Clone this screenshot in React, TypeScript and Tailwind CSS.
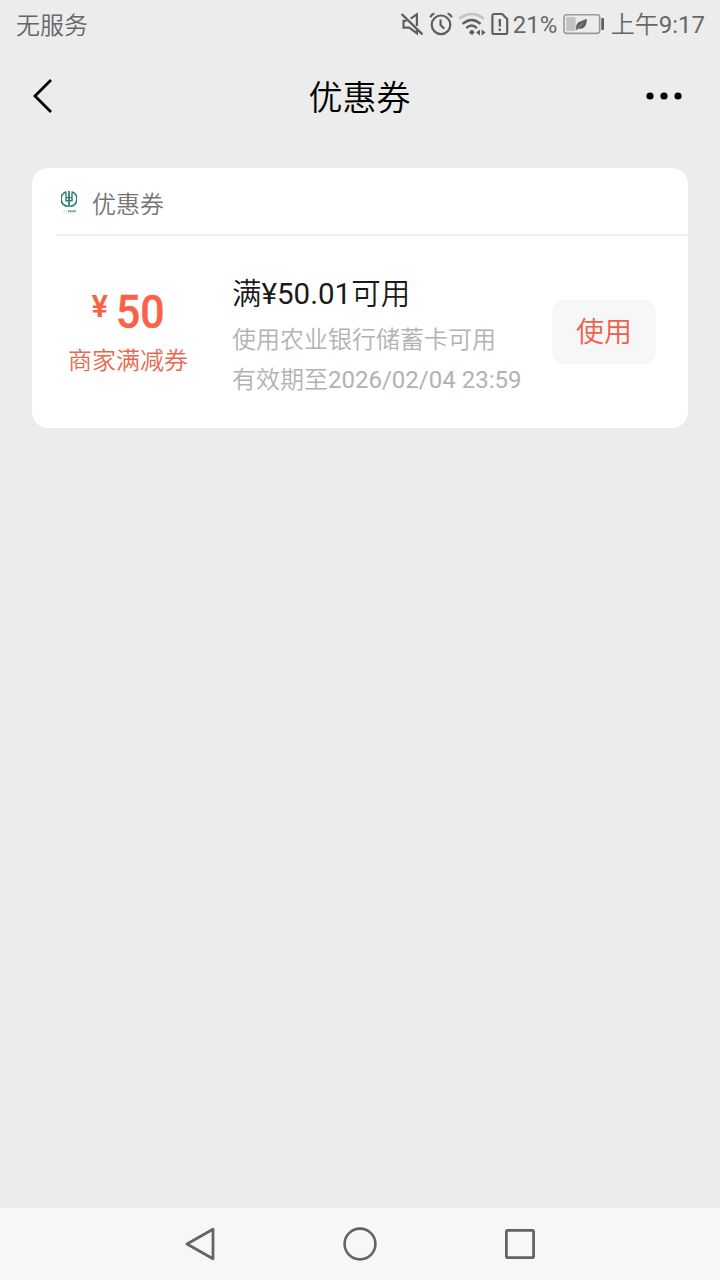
import React from 'react';

interface Coupon {
  id: number;
  amount: string;
  type: string;
  threshold: string;
  description: string;
  expiresAt: string;
}

const coupons: Coupon[] = [
  {
    id: 1,
    amount: '50',
    type: '商家满减券',
    threshold: '¥50.01',
    description: '使用农业银行储蓄卡可用',
    expiresAt: '2026/02/04 23:59',
  },
];

const MuteIcon = () => (
  <svg className="h-6 w-6" viewBox="0 0 24 24" fill="none" stroke="#5f5f5f" strokeWidth="2.2">
    <path d="M1.6 2L22.4 22.4" strokeWidth="2.4" />
    <path d="M6.5 8.8H3.5V15.6H9.2L16.9 21.4V17.5" />
    <path d="M10.6 6.6L16.9 2.4V14" />
  </svg>
);

const AlarmIcon = () => (
  <svg className="h-6 w-6" viewBox="0 0 24 24" fill="none" stroke="#5f5f5f" strokeWidth="2.2">
    <circle cx="12" cy="12.8" r="9.3" />
    <path d="M11.6 7.6V13L15.3 16.8" />
    <path d="M1.2 5.2Q2.4 2.4 5.4 1.5M22.8 5.2Q21.6 2.4 18.6 1.5" />
  </svg>
);

const WifiIcon = () => (
  <svg className="h-6 w-7" viewBox="0 0 28 24" fill="none" stroke="#5f5f5f" strokeWidth="2.4">
    <path d="M1.2 6.8Q13.6 -2.8 26 6.8" stroke="#c2c2c2" />
    <path d="M4.6 11.9Q13.6 4 22.6 11.9" />
    <path d="M8.3 16.2Q13.6 11 18.9 16.2" />
    <circle cx="13.8" cy="20.3" r="2.4" fill="#5f5f5f" stroke="none" />
    <path d="M22 17.4V23.4L18 20.4ZM23.6 17.4V23.4L27.6 20.4Z" fill="#5f5f5f" stroke="none" />
  </svg>
);

const SimIcon = () => (
  <svg className="h-6 w-[18px]" viewBox="0 0 18 24" fill="none" stroke="#5f5f5f" strokeWidth="2.2">
    <path d="M3.2 2H11.2L16.2 7V20.2Q16.2 22 14.4 22H3.2Q1.4 22 1.4 20.2V3.8Q1.4 2 3.2 2Z" />
    <path d="M8.8 7V14.4M8.8 16.6V19" strokeWidth="2.3" />
  </svg>
);

const BatteryIcon = () => (
  <svg className="h-6 w-[42px]" viewBox="0 0 42 24" fill="none">
    <rect x="1" y="2.8" width="35.6" height="18.6" rx="2.6" stroke="#9a9a9a" strokeWidth="1.6" />
    <rect x="3.2" y="5" width="9.4" height="14" fill="#c2c2c2" />
    <path d="M13.2 17.8C12.4 9.6 17 9.6 23.8 7C24 13.2 20.8 18.2 15.2 16.4L13.8 18.2Z" fill="#5f5f5f" />
    <path d="M15 15.6L20 11.2" stroke="#ececec" strokeWidth="0.4" />
    <rect x="38.2" y="6" width="2.8" height="12" rx="1" fill="#5f5f5f" />
  </svg>
);

const BankLogo = () => (
  <svg className="h-6 w-4" viewBox="0 0 16 24" fill="none" stroke="#2f8078">
    <path d="M5.4 .9A7.3 7.3 0 0 0 6.6 15.2M10.6 .9A7.3 7.3 0 0 1 9.4 15.2" strokeWidth="1.9" />
    <path d="M8 0V16" strokeWidth="1.8" />
    <path d="M5 1.8V9.8H11V1.8M5 6.6H11" strokeWidth="1.4" />
    <path d="M1 20.2H6" stroke="#d3e6e4" strokeWidth="1.6" strokeDasharray="1.4 .6" />
    <path d="M7 20.2H15" stroke="#5f9f99" strokeWidth="2" strokeDasharray="1.6 .5" />
    <path d="M3 22.3H13" stroke="#e3efee" strokeWidth=".8" />
  </svg>
);

const StatusBar = () => (
  <div className="flex h-12 items-center pr-[15px] pl-4 text-2xl text-[#666666]">
    <span className="mt-1 font-[350]">无服务</span>
    <div className="ml-auto flex items-center">
      <MuteIcon />
      <div className="ml-[5px]"><AlarmIcon /></div>
      <div className="ml-[5px]"><WifiIcon /></div>
      <div className="ml-[5px]"><SimIcon /></div>
      <span className="mt-0.5 ml-1 w-[43px] whitespace-nowrap">21%</span>
      <div className="ml-[7px]"><BatteryIcon /></div>
      <span className="mt-0.5 ml-[6px] whitespace-nowrap">
        <span className="font-[350]">上午</span>9:17
      </span>
    </div>
  </div>
);

const Header = () => (
  <header className="flex h-24 items-center justify-between pr-[38px] pl-8 text-black">
    <svg className="h-9 w-[38px]" viewBox="0 0 38 36" fill="none" stroke="currentColor" strokeWidth="2.8">
      <path d="M19 2L3 18L19 34" />
    </svg>
    <h1 className="pt-1 pl-[3px] text-[34px] font-[350]">优惠券</h1>
    <svg className="h-9 w-9" viewBox="0 0 36 36" fill="currentColor">
      <circle cx="4" cy="18" r="3.6" />
      <circle cx="18" cy="18" r="3.6" />
      <circle cx="32" cy="18" r="3.6" />
    </svg>
  </header>
);

const CouponCard = ({ coupon }: { coupon: Coupon }) => (
  <div className="mx-8 h-[260px] rounded-2xl bg-white">
    <div className="ml-6 flex h-[68px] items-center border-b-2 border-[#f0f0f0] pt-1 pl-[5px]">
      <BankLogo />
      <span className="ml-[15px] pt-1 text-2xl font-[350] text-[#757575]">优惠券</span>
    </div>
    <div className="flex h-48 items-center pr-8">
      <div className="flex w-[192px] flex-col items-center pt-2 text-[#fa6248]">
        <div className="flex h-[50px] items-start pl-1">
          <span className="mt-[3px] text-[31px] leading-[34px] font-semibold">¥</span>
          <span className="ml-2 origin-left scale-x-93 text-[46px] leading-[50px] font-medium [-webkit-text-stroke:0.4px]">
            {coupon.amount}
          </span>
        </div>
        <span className="text-2xl leading-[48px] font-[350] text-[#e9684f]">{coupon.type}</span>
      </div>
      <div className="ml-2 flex-1 pt-[7px] whitespace-nowrap">
        <h2 className="mb-1 text-[29.5px] leading-11 text-[#1a1a1a]">
          <span className="font-[350]">满</span>
          {coupon.threshold}
          <span className="font-[350]">可用</span>
        </h2>
        <p className="text-2xl leading-10 font-[350] text-[#b2b2b2]">{coupon.description}</p>
        <p className="text-2xl leading-10 text-[#b2b2b2]">
          <span className="font-[350]">有效期至</span>
          {coupon.expiresAt}
        </p>
      </div>
      <button className="h-16 w-[104px] rounded-xl bg-[#f7f7f7] pt-0.5 text-[28px] font-[350] text-[#ee6149]">使用</button>
    </div>
  </div>
);

const NavBar = () => (
  <nav className="flex h-[72px] items-center justify-center gap-[124px] bg-[#f7f7f7]">
    <svg className="h-9 w-9" viewBox="0 0 36 36" fill="none" stroke="#646464" strokeWidth="2.8" strokeLinejoin="round">
      <path d="M31 3.2V32.8L5 18Z" />
    </svg>
    <svg className="h-9 w-9" viewBox="0 0 36 36" fill="none" stroke="#646464" strokeWidth="2.6">
      <circle cx="18" cy="18" r="15.4" />
    </svg>
    <svg className="h-9 w-9" viewBox="0 0 36 36" fill="none" stroke="#646464" strokeWidth="2.8">
      <rect x="4.4" y="4.4" width="27.2" height="27.2" rx="1.4" />
    </svg>
  </nav>
);

const App = () => {
  return (
    <div className="flex h-[1280px] w-[720px] flex-col overflow-hidden bg-[#ececec] font-['Roboto','Noto_Sans_CJK_SC',sans-serif]">
      <StatusBar />
      <Header />
      <main className="flex-1 pt-6">
        {coupons.map((coupon) => (
          <CouponCard key={coupon.id} coupon={coupon} />
        ))}
      </main>
      <NavBar />
    </div>
  );
};

export default App;
